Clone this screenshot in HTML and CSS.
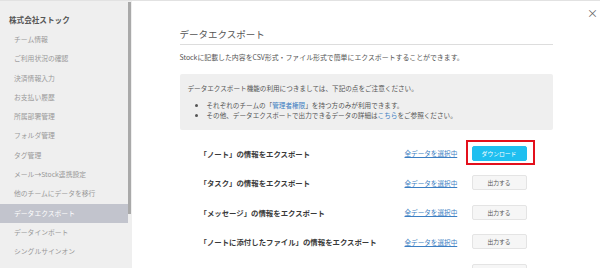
FILE: index.html
```html
<!DOCTYPE html>
<html>
<head>
    <title>データエクスポート</title>
    <link rel="stylesheet" href="styles.css">
</head>
<body>
    <div id="page">
        <div id="sidebar">
            <div id="menu">
                <div class="team-name">株式会社ストック</div>
                <ul>
                    <li>チーム情報</li>
                    <li>ご利用状況の確認</li>
                    <li>決済情報入力</li>
                    <li>お支払い履歴</li>
                    <li>所属部署管理</li>
                    <li>フォルダ管理</li>
                    <li>タグ管理</li>
                    <li>メール→Stock連携設定</li>
                    <li>他のチームにデータを移行</li>
                    <li class="active">データエクスポート</li>
                    <li>データインポート</li>
                    <li>シングルサインオン</li>
                </ul>
            </div>
            <div id="scrollbar"><div class="thumb"></div></div>
        </div>
        <div id="main">
            <div class="close">×</div>
            <div class="content">
                <h1>データエクスポート</h1>
                <p class="lead">Stockに記載した内容をCSV形式・ファイル形式で簡単にエクスポートすることができます。</p>
                <div class="notice">
                    <p>データエクスポート機能の利用につきましては、下記の点をご注意ください。</p>
                    <ul>
                        <li>それぞれのチームの「<a href="#">管理者権限</a>」を持つ方のみが利用できます。</li>
                        <li>その他、データエクスポートで出力できるデータの詳細は<a href="#">こちら</a>をご参照ください。</li>
                    </ul>
                </div>
                <div class="export-row">
                    <span class="label">「ノート」の情報をエクスポート</span>
                    <a class="select" href="#">全データを選択中</a>
                    <span class="highlight"><button class="btn btn-download">ダウンロード</button></span>
                </div>
                <div class="export-row">
                    <span class="label">「タスク」の情報をエクスポート</span>
                    <a class="select" href="#">全データを選択中</a>
                    <button class="btn">出力する</button>
                </div>
                <div class="export-row">
                    <span class="label">「メッセージ」の情報をエクスポート</span>
                    <a class="select" href="#">全データを選択中</a>
                    <button class="btn">出力する</button>
                </div>
                <div class="export-row">
                    <span class="label">「ノートに添付したファイル」の情報をエクスポート</span>
                    <a class="select" href="#">全データを選択中</a>
                    <button class="btn">出力する</button>
                </div>
                <div class="export-row">
                    <span class="label"></span>
                    <span class="select"></span>
                    <button class="btn"></button>
                </div>
            </div>
        </div>
    </div>
</body>
</html>
```

FILE: styles.css
```css
body {
    margin: 0;
    padding: 0;
    font-family: "Noto Sans CJK JP", "Liberation Sans", sans-serif;
    background-color: #fff;
    color: #555;
    overflow: hidden;
}

#page {
    display: flex;
    height: 268px;
    border-top: 1px solid #e2e2e2;
    box-sizing: border-box;
}

#sidebar {
    display: flex;
    width: 132px;
    flex-shrink: 0;
    background-color: #efefef;
}

#menu {
    width: 128px;
    padding-top: 9px;
}

.team-name {
    font-size: 7.6px;
    font-weight: bold;
    color: #555;
    line-height: 20px;
    padding-left: 9px;
}

#menu ul {
    list-style: none;
    margin: 0;
    padding: 0;
}

#menu li {
    font-size: 6.8px;
    color: #999;
    line-height: 19.3px;
    padding-left: 14px;
}

#menu li.active {
    background-color: #c2c4cd;
    color: #fff;
}

#scrollbar {
    width: 4px;
    padding-top: 1px;
}

#scrollbar .thumb {
    width: 3px;
    height: 212px;
    background-color: #a9a9a9;
}

#main {
    flex: 1;
    position: relative;
}

.close {
    position: absolute;
    right: 2px;
    top: 4px;
    font-size: 11px;
    line-height: 16px;
    color: #666;
}

.content {
    width: 373px;
    margin: 0 auto;
    padding-top: 26px;
}

h1 {
    font-size: 9.5px;
    font-weight: normal;
    color: #555;
    line-height: 14px;
    margin: 0;
    padding-bottom: 3px;
    border-bottom: 1px solid #ddd;
}

.lead {
    font-size: 6.9px;
    line-height: 12px;
    margin: 6px 0 0;
    color: #555;
}

.notice {
    margin-top: 11px;
    background-color: #efefef;
    border-radius: 2px;
    padding: 8px 8px 9px;
    height: 56px;
    box-sizing: border-box;
}

.notice p {
    font-size: 6.6px;
    line-height: 12px;
    margin: 0;
}

.notice ul {
    margin: 7px 0 0;
    padding-left: 19px;
}

.notice li {
    font-size: 6.6px;
    line-height: 9.5px;
}

.notice a {
    color: #3c7ec2;
    text-decoration: none;
}

.export-row {
    display: flex;
    align-items: center;
    height: 29.5px;
    padding-left: 20px;
}

.notice + .export-row {
    margin-top: 8.5px;
}

.label {
    width: 205px;
    font-size: 7.4px;
    font-weight: bold;
    color: #3a3a3a;
}

.select {
    width: 67px;
    font-size: 6.6px;
    color: #3c7ec2;
    text-decoration: underline;
}

.btn {
    display: block;
    width: 55px;
    height: 15px;
    padding: 0;
    border: 1px solid #e4e4e4;
    border-radius: 2px;
    background-color: #f6f6f6;
    color: #555;
    font-family: "Noto Sans CJK JP", "Liberation Sans", sans-serif;
    font-size: 5.8px;
}

.highlight {
    display: block;
    border: 2px solid #e3101c;
    padding: 4px 6px 2px 4px;
    margin: -6px -8px -4px -6px;
}

.btn-download {
    background-color: #1fbff0;
    border-color: #1fbff0;
    color: #fff;
}
```
